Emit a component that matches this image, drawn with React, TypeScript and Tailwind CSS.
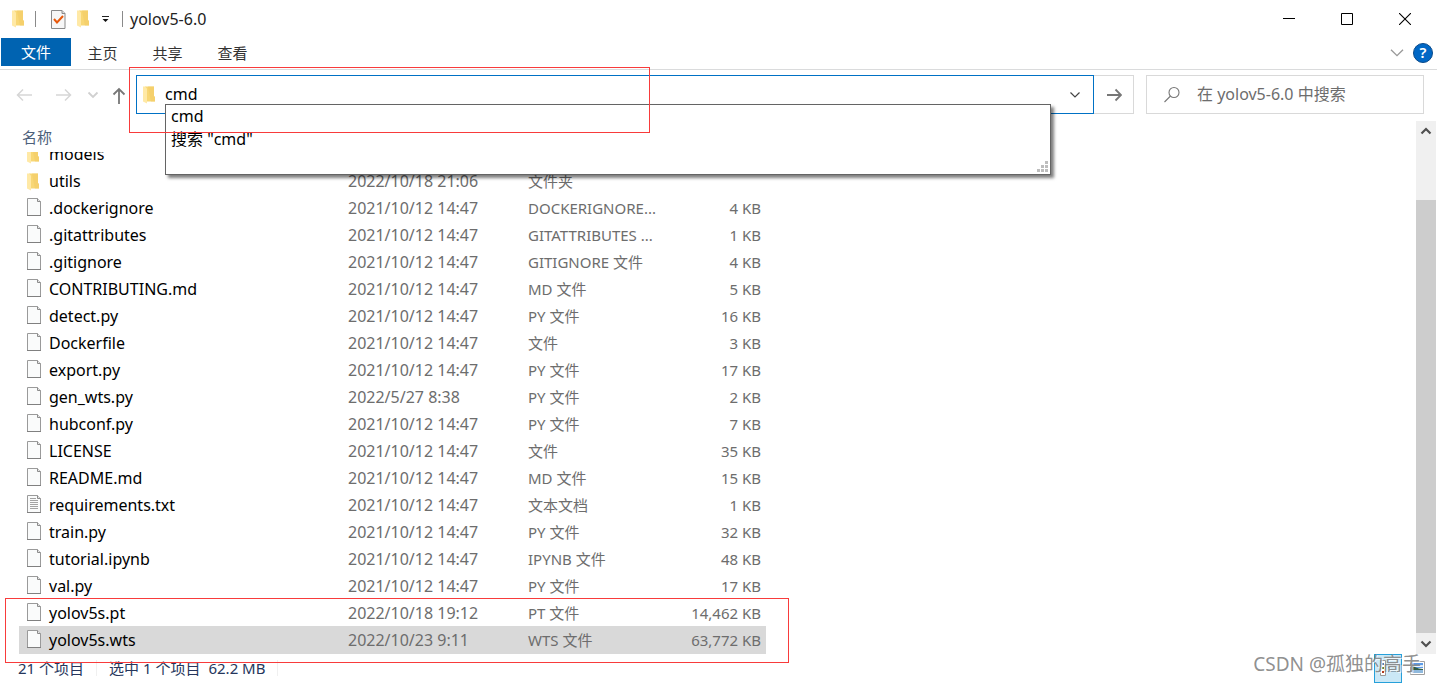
import React, { useState } from 'react';

type Kind = 'folder' | 'file' | 'text';

interface FileRow {
  name: string;
  date: string;
  type: string;
  size: string;
  kind: Kind;
}

const files: FileRow[] = [
  { name: 'utils', date: '2022/10/18 21:06', type: '文件夹', size: '', kind: 'folder' },
  { name: '.dockerignore', date: '2021/10/12 14:47', type: 'DOCKERIGNORE...', size: '4 KB', kind: 'file' },
  { name: '.gitattributes', date: '2021/10/12 14:47', type: 'GITATTRIBUTES ...', size: '1 KB', kind: 'file' },
  { name: '.gitignore', date: '2021/10/12 14:47', type: 'GITIGNORE 文件', size: '4 KB', kind: 'file' },
  { name: 'CONTRIBUTING.md', date: '2021/10/12 14:47', type: 'MD 文件', size: '5 KB', kind: 'file' },
  { name: 'detect.py', date: '2021/10/12 14:47', type: 'PY 文件', size: '16 KB', kind: 'file' },
  { name: 'Dockerfile', date: '2021/10/12 14:47', type: '文件', size: '3 KB', kind: 'file' },
  { name: 'export.py', date: '2021/10/12 14:47', type: 'PY 文件', size: '17 KB', kind: 'file' },
  { name: 'gen_wts.py', date: '2022/5/27 8:38', type: 'PY 文件', size: '2 KB', kind: 'file' },
  { name: 'hubconf.py', date: '2021/10/12 14:47', type: 'PY 文件', size: '7 KB', kind: 'file' },
  { name: 'LICENSE', date: '2021/10/12 14:47', type: '文件', size: '35 KB', kind: 'file' },
  { name: 'README.md', date: '2021/10/12 14:47', type: 'MD 文件', size: '15 KB', kind: 'file' },
  { name: 'requirements.txt', date: '2021/10/12 14:47', type: '文本文档', size: '1 KB', kind: 'text' },
  { name: 'train.py', date: '2021/10/12 14:47', type: 'PY 文件', size: '32 KB', kind: 'file' },
  { name: 'tutorial.ipynb', date: '2021/10/12 14:47', type: 'IPYNB 文件', size: '48 KB', kind: 'file' },
  { name: 'val.py', date: '2021/10/12 14:47', type: 'PY 文件', size: '17 KB', kind: 'file' },
  { name: 'yolov5s.pt', date: '2022/10/18 19:12', type: 'PT 文件', size: '14,462 KB', kind: 'file' },
  { name: 'yolov5s.wts', date: '2022/10/23 9:11', type: 'WTS 文件', size: '63,772 KB', kind: 'file' },
];

const FolderIcon: React.FC = () => (
  <svg width="14" height="18" viewBox="0 0 14 18" className="shrink-0">
    <path d="M2 .5h9V10l1 1v4.500H2z" fill="#f8d775" />
    <path d="M5 .5h6V10l1 1v4.500H8z" fill="#f3cb66" fillOpacity=".6" />
    <path d="M0 .5h2l2 2V17.500L0 15.500z" fill="#ffe9a6" />
  </svg>
);

const FileIcon: React.FC<{ lines?: boolean }> = ({ lines }) => (
  <svg width="14" height="18" viewBox="0 0 14 18" className="mb-[3px] shrink-0">
    <path d="M.5.5h10l3 3v14H.5z" fill="#fafbfb" stroke="#9a9a9a" />
    <path d="M10.500.5v3h3" fill="#e8e8e8" stroke="#8c8c8c" />
    <path d="M0 17.500h14" stroke="#808080" />
    {lines && <path d="M3 3.500h6M3 5.500h8M3 7.500h8M3 9.500h8M3 11.500h8M3 13.500h8" stroke="#a3a3a3" />}
  </svg>
);

const Chevron: React.FC<{ color: string; size?: number; up?: boolean; width?: number }> = ({ color, size = 12, up, width = 1.4 }) => (
  <svg width={size} height={size} viewBox="0 0 12 12" fill="none">
    <path d={up ? 'M1.500 8.500L6 4l4.500 4.500' : 'M1.500 3.500L6 8l4.500-4.500'} stroke={color} strokeWidth={width} />
  </svg>
);

const TitleBar: React.FC = () => (
  <header className="flex h-[38px] items-center pl-3 pr-[3px]">
    <FolderIcon />
    <span className="ml-[9px] h-4 w-px bg-[#8a8a8a]" />
    <button aria-label="属性" className="ml-[15px]">
      <svg width="15" height="19" viewBox="0 0 15 19" className="block">
        <path d="M.5.500h10.500l3 3v15H.5z" fill="#f7f7f7" stroke="#8a8a8a" />
        <path d="M11 .5v3h3" fill="#ddd" stroke="#8a8a8a" />
        <path d="M3 9l3 3.500L12 6" fill="none" stroke="#e8590c" strokeWidth="2" />
      </svg>
    </button>
    <button aria-label="新建文件夹" className="ml-[11px]">
      <FolderIcon />
    </button>
    <button aria-label="自定义" className="ml-[10px]">
      <svg width="9" height="8" viewBox="0 0 9 8" className="block">
        <path d="M1 1.500h7" stroke="#222" />
        <path d="M1.500 4h6l-3 3z" fill="#111" />
      </svg>
    </button>
    <span className="ml-3 h-4 w-px bg-[#8a8a8a]" />
    <h1 className="ml-[7px] flex-1">yolov5-6.0</h1>
    <button aria-label="最小化" className="flex h-full w-[58px] items-center justify-center">
      <svg width="12" height="12" viewBox="0 0 12 12"><path d="M0 5.500h12" stroke="#000" /></svg>
    </button>
    <button aria-label="最大化" className="flex h-full w-[58px] items-center justify-center">
      <svg width="12" height="12" viewBox="0 0 12 12"><path d="M.5.500h11v11H.5z" fill="none" stroke="#000" /></svg>
    </button>
    <button aria-label="关闭" className="flex h-full w-[58px] items-center justify-center">
      <svg width="12" height="12" viewBox="0 0 12 12"><path d="M0 0l12 12M12 0L0 12" stroke="#000" strokeWidth="1.100" /></svg>
    </button>
  </header>
);

const Ribbon: React.FC = () => (
  <nav className="flex h-8 border-b border-[#dadbdc] pl-px pr-1 text-[15px] text-[#333]">
    <button className="h-7 w-[70px] bg-[#0063b1] text-white">文件</button>
    {['主页', '共享', '查看'].map((tab) => (
      <button key={tab} className="w-[65px] pb-0.5 pr-0.5">{tab}</button>
    ))}
    <div className="ml-auto flex items-center gap-2 pb-0.5">
      <button aria-label="展开功能区">
        <Chevron color="#999" size={16} width={1} />
      </button>
      <button aria-label="帮助" className="flex size-5 items-center justify-center rounded-full border border-[#0a4a8a] bg-[#0067c5] text-[15px] font-semibold leading-none text-white">
        ?
      </button>
    </div>
  </nav>
);

const AddressBar: React.FC = () => {
  const [path, setPath] = useState('cmd');
  const [query, setQuery] = useState('');

  return (
    <div className="flex h-[50px] items-start pr-[13px] pt-[5px]">
      <div className="flex h-10 w-[136px] shrink-0 items-center pl-4">
        <button aria-label="后退" className="w-[39px]">
          <svg width="17" height="14" viewBox="0 0 17 14" fill="none" stroke="#d6d6d6" strokeWidth="1.500">
            <path d="M1.500 7H16M7 1.500L1.500 7 7 12.500" />
          </svg>
        </button>
        <button aria-label="前进" className="w-8">
          <svg width="17" height="14" viewBox="0 0 17 14" fill="none" stroke="#d6d6d6" strokeWidth="1.500">
            <path d="M1 7h14.500M10 1.500L15.500 7 10 12.500" />
          </svg>
        </button>
        <button aria-label="最近位置" className="w-[25px]">
          <Chevron color="#d0d0d0" width={1.8} />
        </button>
        <button aria-label="向上">
          <svg width="14" height="17" viewBox="0 0 14 17" fill="none" stroke="#777" strokeWidth="1.800" className="block">
            <path d="M7 17V2M1.500 7.500L7 2l5.500 5.500" />
          </svg>
        </button>
      </div>

      <div className="relative flex h-[39px] flex-1 items-center border border-[#0071c5] pl-1.5 pr-3">
        <FolderIcon />
        <input
          aria-label="地址"
          value={path}
          onChange={(e) => setPath(e.target.value)}
          className="ml-2 min-w-0 flex-1 pb-0.5 text-black outline-none"
        />
        <button aria-label="以前的位置">
          <Chevron color="#444" width={1.2} />
        </button>
        <ul className="absolute left-7 right-[42px] top-7 z-10 h-[71px] border border-[#646464] bg-white pl-[5px] leading-[23px] text-black shadow-[3px_3px_3px_rgba(0,0,0,0.5)]">
          <li>cmd</li>
          <li>搜索 "cmd"</li>
          <svg width="11" height="11" viewBox="0 0 11 11" className="absolute bottom-0.5 right-0.5" fill="#bdbdbd">
            <path d="M8 0h3v3H8zM4 4h3v3H4zM8 4h3v3H8zM0 8h3v3H0zM4 8h3v3H4zM8 8h3v3H8z" />
          </svg>
        </ul>
        {/* red highlight around the address input */}
        <div className="pointer-events-none absolute -left-2 -top-[9px] z-20 h-[66px] w-[521px] border border-[#f83b3b]" />
      </div>
      <button aria-label="转到" className="flex h-[39px] w-10 items-center justify-center border border-l-0 border-[#d9d9d9]">
        <svg width="16" height="14" viewBox="0 0 16 14" fill="none" stroke="#777" strokeWidth="1.800">
          <path d="M1 7h14M9.500 1.500L15 7l-5.500 5.500" />
        </svg>
      </button>
      <label className="ml-3 flex h-[39px] w-[278px] items-center border border-[#d9d9d9] pl-4">
        <svg width="18" height="18" viewBox="0 0 18 18" fill="none" stroke="#777" strokeWidth="1.100">
          <circle cx="11" cy="6.500" r="5" />
          <path d="M7.500 10L1.500 16" />
        </svg>
        <input
          aria-label="搜索"
          value={query}
          onChange={(e) => setQuery(e.target.value)}
          placeholder="在 yolov5-6.0 中搜索"
          className="ml-4 min-w-0 flex-1 pb-0.5 outline-none placeholder:text-[#6d6d6d]"
        />
      </label>
    </div>
  );
};

const FileList: React.FC = () => (
  <main className="flex flex-1 items-stretch justify-between">
    <div className="relative ml-[19px]">
      <table className="w-[747px] table-fixed border-collapse">
        <colgroup>
          <col className="w-[329px]" />
          <col className="w-[180px]" />
          <col className="w-[140px]" />
          <col />
        </colgroup>
        <thead>
          <tr className="h-8">
            <th scope="col" className="p-0 pl-[3px] pt-0.5 text-left text-[15px] font-normal text-[#4c607a]">名称</th>
          </tr>
        </thead>
        <tbody className="text-[#6d6d6d]">
          {/* first row is scrolled halfway under the header */}
          <tr>
            <td className="p-0">
              <div className="flex h-4 items-end overflow-hidden pl-2 text-black">
                <span className="flex items-center gap-2 leading-[27px]">
                  <FolderIcon />
                  models
                </span>
              </div>
            </td>
          </tr>
          {files.map((file) => (
            <tr
              key={file.name}
              className={file.name === 'yolov5s.wts' ? 'h-[27px] bg-[#d9d9d9] shadow-[0_-1px_0_#d9d9d9]' : 'h-[27px]'}
            >
              <td className="p-0 pl-2 text-black">
                <span className="flex items-center gap-2 leading-[27px]">
                  {file.kind === 'folder' ? <FolderIcon /> : <FileIcon lines={file.kind === 'text'} />}
                  {file.name}
                </span>
              </td>
              <td className="p-0 leading-[27px]">{file.date}</td>
              <td className="whitespace-nowrap p-0 text-[15px] leading-[27px]">{file.type}</td>
              <td className="p-0 pr-[5px] text-right text-[15px] leading-[27px]">{file.size}</td>
            </tr>
          ))}
        </tbody>
      </table>
      {/* red highlight around the weight files */}
      <div className="pointer-events-none absolute -bottom-[9px] -left-3.5 z-10 h-[65px] w-[784px] border border-[#f83b3b]" />
    </div>

    <div className="mr-px mt-px flex w-5 flex-col bg-[#f0f0f0]">
      <button aria-label="向上滚动" className="flex h-5 items-center justify-center">
        <Chevron color="#505050" up width={2.2} />
      </button>
      <div className="mt-[59px] flex-1 bg-[#cdcdcd]" />
      <button aria-label="向下滚动" className="flex h-[21px] items-center justify-center">
        <Chevron color="#505050" width={2.2} />
      </button>
    </div>
  </main>
);

const StatusBar: React.FC = () => (
  <footer className="relative flex h-[30px] items-center pb-0.5 pl-[18px] pr-3 text-[15px] text-[#26365c]">
    <span>21 个项目</span>
    <span className="ml-3 h-4 w-px bg-[#f0f0f0]" />
    <span className="ml-3">选中 1 个项目</span>
    <span className="ml-2">62.2 MB</span>
    <span className="ml-3 h-4 w-px bg-[#f0f0f0]" />
    <div className="ml-auto flex items-center gap-2">
      <button aria-label="详细信息" className="flex h-[29px] w-7 items-center justify-center border border-[#26a0da] bg-[#cbe8f6]">
        <svg width="18" height="16" viewBox="0 0 18 16">
          <path d="M1.500.5h5v15h-5z" fill="#fff" stroke="#999" />
          <path d="M3 3h2v2H3z" fill="#4a7fb5" />
          <path d="M3 7h2v2H3z" fill="#5a8a4a" />
          <path d="M3 11h2v2H3z" fill="#b03a1e" />
          <path d="M9 3.500h8M9 7.500h8M9 11.500h8" stroke="#8aa4b5" />
        </svg>
      </button>
      <button aria-label="大图标">
        <svg width="15" height="14" viewBox="0 0 15 14" className="block">
          <path d="M.5.500h14v13H.5z" fill="#fff" stroke="#a0a0a0" />
          <path d="M2 2h11v5H2z" fill="#5b9be8" />
          <path d="M4 5.500l5-1.500h4v2H4z" fill="#d5e8f8" />
          <path d="M2 4.500l4 2 3 1 4 .5v1H2z" fill="#2f5d48" />
          <path d="M2 9h11v3H2z" fill="#8fb9dd" />
        </svg>
      </button>
    </div>
    <span className="pointer-events-none absolute right-4 top-[-2px] text-[19px] leading-6 text-[#828282]/90 [text-shadow:1px_1px_0_rgba(255,255,255,0.7)]">
      CSDN @孤独的高手
    </span>
  </footer>
);

const App: React.FC = () => (
  <div className="flex min-h-screen flex-col bg-white font-['Noto_Sans','Noto_Sans_CJK_SC',sans-serif] text-base leading-6 text-[#222]">
    <TitleBar />
    <Ribbon />
    <AddressBar />
    <FileList />
    <StatusBar />
  </div>
);

export default App;
